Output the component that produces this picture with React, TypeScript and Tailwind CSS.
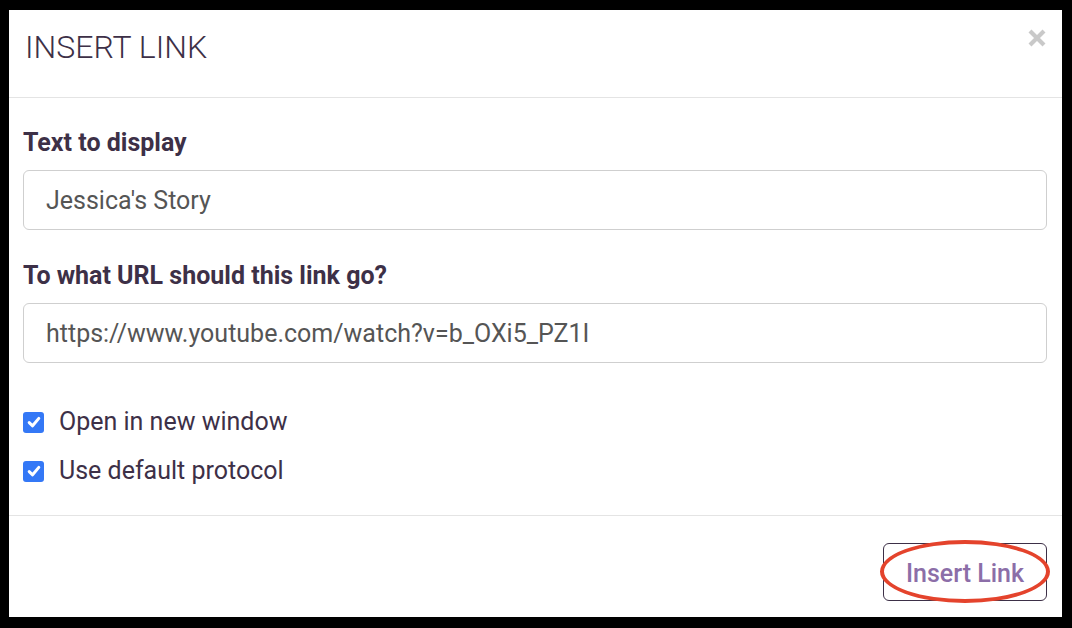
import React from "react"

const font = { fontFamily: "Roboto, 'Liberation Sans', sans-serif" }

function Checkbox() {
  return (
    <span className="flex h-[21px] w-[21px] items-center justify-center rounded-[3px] bg-[#3478f6]">
      <svg width="16" height="16" viewBox="0 0 16 16" fill="none">
        <path d="M3.2 8.6 L6.6 11.8 L12.8 4.4" stroke="white" strokeWidth="3" strokeLinecap="round" strokeLinejoin="round" />
      </svg>
    </span>
  )
}

function Field({ label, value, className }: { label: string; value: string; className?: string }) {
  return (
    <div className={className}>
      <label className="block h-[30px] text-[25px] font-bold leading-[30px] text-[#3d3047]">{label}</label>
      <div className="mt-3 flex h-[60px] items-center rounded-[6px] border border-[#cfcfcf] pl-[22px] pt-[2px] text-[25px] text-[#555555]">
        {value}
      </div>
    </div>
  )
}

export default function App() {
  return (
    <div className="h-[628px] w-[1072px] bg-black pl-[9px] pt-[10px]" style={font}>
      <div className="flex h-[607px] w-[1053px] flex-col bg-white">
        <div className="flex h-[88px] items-start justify-between border-b border-[#e4e4e4] pl-4 pr-4">
          <h1 className="mt-[17px] text-[32px] font-light leading-[40px] text-[#3d3047]">INSERT LINK</h1>
          <svg className="mt-[19px]" width="18" height="18" viewBox="0 0 18 18">
            <path d="M2 2 L16 16 M16 2 L2 16" stroke="#c9c9c9" strokeWidth="4.2" />
          </svg>
        </div>

        <div className="border-b border-[#e4e4e4] px-[14px] pb-[30px] pt-[30px]">
          <Field label="Text to display" value="Jessica's Story" className="mr-px" />
          <Field label="To what URL should this link go?" value="https://www.youtube.com/watch?v=b_OXi5_PZ1I" className="mr-px mt-[31px]" />

          <div className="mt-[44px] flex h-[30px] items-center gap-[15px]">
            <Checkbox />
            <span className="text-[25px] text-[#3d3047]">Open in new window</span>
          </div>
          <div className="mt-[19px] mb-[-1px] flex h-[30px] items-center gap-[15px]">
            <Checkbox />
            <span className="text-[25px] text-[#3d3047]">Use default protocol</span>
          </div>
        </div>

        <div className="flex flex-1 items-start justify-end pr-[15px] pt-[27px]">
          <div className="relative">
            <button className="h-[58px] w-[164px] rounded-[6px] border border-[#3d3047] pt-[3px] text-[25px] font-medium text-[#8c6ea8]">
              Insert Link
            </button>
            <span className="pointer-events-none absolute -left-[3px] -top-[3px] h-[63px] w-[170px] rounded-[50%] border-4 border-[#e4432c]" />
          </div>
        </div>
      </div>
    </div>
  )
}
